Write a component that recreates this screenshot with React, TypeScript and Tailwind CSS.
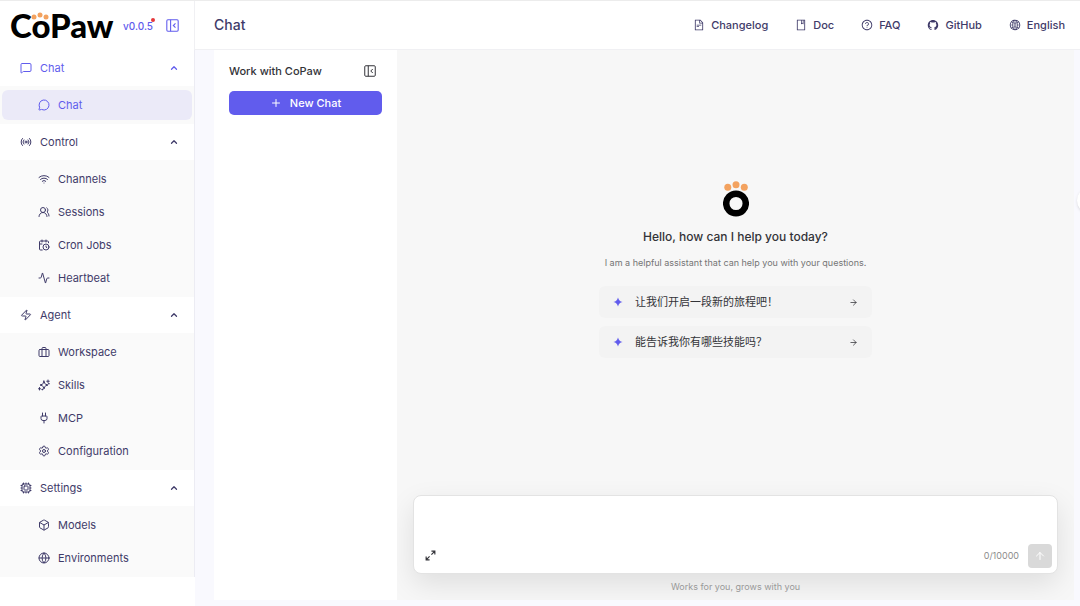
import React from 'react';
import {
    Activity,
    ArrowRight,
    ArrowUp,
    Box,
    CalendarClock,
    ChevronUp,
    Cpu,
    Globe,
    MessageCircle,
    MessageSquare,
    Plug,
    Plus,
    Radio,
    Settings,
    UsersRound,
    Wifi,
    Zap,
} from 'lucide-react';
import { FiBriefcase } from 'react-icons/fi';
import {
    AiOutlineBook,
    AiOutlineFileText,
    AiOutlineGithub,
    AiOutlineGlobal,
    AiOutlineQuestionCircle,
} from 'react-icons/ai';

type IconType = React.ComponentType<{ className?: string }>;

const SkillsIcon: IconType = ({ className }) => (
    <svg viewBox="0 0 24 24" fill="none" stroke="currentColor" strokeWidth="2" strokeLinecap="round" strokeLinejoin="round" className={className}>
        <path d="M12 4l1.8 5.2a2 2 0 0 0 1.2 1.2L20 12l-5 1.8a2 2 0 0 0-1.2 1.2L12 20l-1.8-5a2 2 0 0 0-1.2-1.2L4 12l5-1.6a2 2 0 0 0 1.2-1.2z" />
        <path d="M20 2v5M17.500 4.500h5M3 17v5M1 19.500h4" />
        <circle cx="8.500" cy="21" r="1" />
        <circle cx="21.500" cy="9.500" r="0.600" />
    </svg>
);

const PanelIcon: IconType = ({ className }) => (
    <svg viewBox="0 0 24 24" fill="none" stroke="currentColor" strokeWidth="2" className={className}>
        <rect x="1.500" y="1.500" width="21" height="21" rx="2" />
        <path d="M8.500 1.500v21" />
        <path d="M17.500 8l-4 4 4 4" />
    </svg>
);

const ExpandIcon: IconType = ({ className }) => (
    <svg viewBox="0 0 24 24" fill="none" stroke="currentColor" strokeWidth="2.500" className={className}>
        <path d="M14 2.500h7.500V10M21 3l-7 7M10 21.500H2.500V14M3 21l7-7" />
    </svg>
);

const SparkIcon: IconType = ({ className }) => (
    <svg viewBox="0 0 24 24" fill="currentColor" className={className}>
        <path d="M12 1c1.800 7 4.500 9.300 11 11-6.500 1.700-9.200 4-11 11-1.800-7-4.500-9.300-11-11 6.500-1.700 9.200-4 11-11z" />
    </svg>
);

const PawMark: IconType = ({ className }) => (
    <svg viewBox="0 0 26 36" className={className}>
        <circle cx="13" cy="22.500" r="9.800" fill="none" stroke="#000" strokeWidth="6.500" />
        <circle cx="4.800" cy="6.200" r="3.500" fill="#f3a25f" />
        <circle cx="13" cy="3.700" r="3.500" fill="#f3a25f" />
        <circle cx="21.300" cy="6.200" r="3.500" fill="#f3a25f" />
    </svg>
);

const groups: { label: string; icon: IconType; active?: boolean; items: { label: string; icon: IconType; active?: boolean }[] }[] = [
    { label: 'Chat', icon: MessageSquare, active: true, items: [{ label: 'Chat', icon: MessageCircle, active: true }] },
    {
        label: 'Control',
        icon: Radio,
        items: [
            { label: 'Channels', icon: Wifi },
            { label: 'Sessions', icon: UsersRound },
            { label: 'Cron Jobs', icon: CalendarClock },
            { label: 'Heartbeat', icon: Activity },
        ],
    },
    {
        label: 'Agent',
        icon: Zap,
        items: [
            { label: 'Workspace', icon: FiBriefcase },
            { label: 'Skills', icon: SkillsIcon },
            { label: 'MCP', icon: Plug },
            { label: 'Configuration', icon: Settings },
        ],
    },
    {
        label: 'Settings',
        icon: Cpu,
        items: [
            { label: 'Models', icon: Box },
            { label: 'Environments', icon: Globe },
        ],
    },
];

const links: { label: string; icon: IconType }[] = [
    { label: 'Changelog', icon: AiOutlineFileText },
    { label: 'Doc', icon: AiOutlineBook },
    { label: 'FAQ', icon: AiOutlineQuestionCircle },
    { label: 'GitHub', icon: AiOutlineGithub },
];

const prompts = ['让我们开启一段新的旅程吧！', '能告诉我你有哪些技能吗？'];

function Sidebar() {
    return (
        <aside className="flex w-[195px] shrink-0 flex-col bg-white">
            <div className="flex h-[49px] items-center border-r border-[#f0f0f3] pl-[10px]">
                <div className="relative w-[104px] pb-[2px] font-['Lato'] text-[33px] leading-[40px] font-black text-black">
                    CoPaw
                    <svg viewBox="0 0 18 8" className="absolute top-[7px] left-[21px] h-2 w-[18px]">
                        <circle cx="3" cy="5" r="2.500" fill="#f3a25f" />
                        <circle cx="9" cy="3" r="2.500" fill="#f3a25f" />
                        <circle cx="15" cy="5" r="2.500" fill="#f3a25f" />
                    </svg>
                </div>
                <div className="relative ml-[9px] text-[10px] leading-4 font-medium text-[#615ced]">
                    v0.0.5
                    <span className="absolute top-0 -right-[2px] size-1 rounded-full bg-[#e5383b]" />
                </div>
                <button aria-label="Collapse sidebar" className="mr-[15px] ml-auto text-[#615ced]">
                    <PanelIcon className="size-[13px]" />
                </button>
            </div>
            <nav className="border-r border-[#ececf3]">
                {groups.map((g) => (
                    <div key={g.label}>
                        <button
                            className={`flex h-9 w-full items-center gap-2 pr-[15px] pl-5 ${g.active ? 'text-[#615ced]' : 'text-[#3f3b69]'}`}
                        >
                            <g.icon className="size-3" />
                            <span>{g.label}</span>
                            <ChevronUp className="ml-auto size-[10px]" strokeWidth={3} />
                        </button>
                        <ul className="space-y-[3px] bg-[#fafafa] px-[2px] pt-1 pb-1">
                            {g.items.map((item) => (
                                <li key={item.label}>
                                    <a
                                        href="#"
                                        className={`flex h-[30px] items-center gap-2 rounded-md pl-9 ${item.active ? 'bg-[#ebeaf8] text-[#615ced]' : 'text-[#3f3b69]'}`}
                                    >
                                        <item.icon className="size-3" />
                                        <span>{item.label}</span>
                                    </a>
                                </li>
                            ))}
                        </ul>
                    </div>
                ))}
            </nav>
        </aside>
    );
}

function Header() {
    return (
        <header className="flex h-[49px] shrink-0 items-center border-b border-[#f0f0f3] bg-white pr-[15px] pl-[19px] font-medium text-[#3f3b69]">
            <h1 className="text-[14px]">Chat</h1>
            <div className="ml-auto flex items-center gap-[27px]">
                {links.map((l) => (
                    <a key={l.label} href="#" className="flex items-center gap-[6px]">
                        <l.icon className="size-3" />
                        {l.label}
                    </a>
                ))}
                <button className="flex items-center gap-[6px]">
                    <AiOutlineGlobal className="size-3" />
                    English
                </button>
            </div>
        </header>
    );
}

function SessionList() {
    return (
        <section className="w-[183px] shrink-0 bg-white px-[15px] pt-3">
            <div className="flex h-[18px] items-center justify-between pr-[6px] text-[#333338]">
                <h2 className="font-medium">Work with CoPaw</h2>
                <button aria-label="Collapse list">
                    <PanelIcon className="size-3" />
                </button>
            </div>
            <button className="mt-[11px] flex h-6 w-full items-center justify-center gap-2 rounded-[5px] bg-[#615ced] font-medium text-white">
                <Plus className="size-3" />
                New Chat
            </button>
        </section>
    );
}

function Composer() {
    return (
        <div className="rounded-lg border border-[#e3e3e3] bg-white shadow-[0_10px_28px_rgba(0,0,0,0.1)]">
            <textarea aria-label="Message" className="block h-12 w-full resize-none px-3 py-2 outline-none" />
            <div className="flex h-[29px] items-start pr-[5px] pl-[11px]">
                <button aria-label="Expand" className="mt-[6px] text-[#333338]">
                    <ExpandIcon className="size-[11px]" />
                </button>
                <span className="ml-auto text-[9px] leading-6 text-[#8c8c8c]">0/10000</span>
                <button aria-label="Send" className="ml-[9px] flex size-6 items-center justify-center rounded bg-[#d9d9d9] text-white">
                    <ArrowUp className="size-3" />
                </button>
            </div>
        </div>
    );
}

export default function App() {
    return (
        <div className="relative flex h-screen overflow-hidden border-t border-[#ececec] bg-[#f9f9fe] font-['Inter','Noto_Sans_CJK_SC',sans-serif] text-[11px] leading-4">
            <Sidebar />
            <div className="flex min-w-0 flex-1 flex-col">
                <Header />
                <main className="flex min-h-0 flex-1 pr-[6px] pb-[6px] pl-[19px]">
                    <SessionList />
                    <section className="flex min-w-0 flex-1 flex-col overflow-hidden bg-[#f7f7f7] px-4">
                        <div className="flex flex-1 flex-col items-center justify-center pb-[6px]">
                            <PawMark className="h-9 w-[26px]" />
                            <h2 className="mt-3 text-[12px] font-medium text-[#333338]">Hello, how can I help you today?</h2>
                            <p className="mt-[10px] text-[9px] text-[#757575]">
                                I am a helpful assistant that can help you with your questions.
                            </p>
                            <div className="mt-[15px] w-[273px] space-y-2">
                                {prompts.map((p) => (
                                    <button key={p} className="flex h-8 w-full items-center rounded-md bg-[#f3f3f3] px-[14px] text-[#333338]">
                                        <SparkIcon className="size-[10px] text-[#615ced]" />
                                        <span className="ml-3">{p}</span>
                                        <ArrowRight className="ml-auto size-[9px]" />
                                    </button>
                                ))}
                            </div>
                        </div>
                        <Composer />
                        <p className="py-[5px] text-center text-[9px] text-[#999999]">Works for you, grows with you</p>
                    </section>
                </main>
            </div>
            <button aria-label="Open assistant" className="absolute top-[186px] -right-6 size-[27px] rounded-full bg-white shadow-sm" />
        </div>
    );
}
